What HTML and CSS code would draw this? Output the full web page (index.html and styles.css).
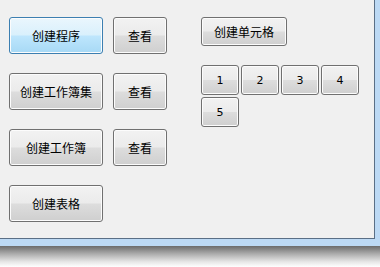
FILE: index.html
```html
<!DOCTYPE html>
<html>
<head>
<meta charset="utf-8">
<link rel="stylesheet" href="styles.css">
</head>
<body>
<div class="window">
  <div class="frame">
    <div class="client">
      <div class="left">
        <div class="row">
          <button class="btn big active">创建程序</button>
          <button class="btn small">查看</button>
        </div>
        <div class="row">
          <button class="btn big">创建工作簿集</button>
          <button class="btn small">查看</button>
        </div>
        <div class="row">
          <button class="btn big">创建工作簿</button>
          <button class="btn small">查看</button>
        </div>
        <div class="row">
          <button class="btn big">创建表格</button>
        </div>
      </div>
      <div class="right">
        <button class="btn cell">创建单元格</button>
        <div class="nums">
          <button class="btn num">1</button>
          <button class="btn num">2</button>
          <button class="btn num">3</button>
          <button class="btn num">4</button>
          <button class="btn num">5</button>
        </div>
      </div>
    </div>
  </div>
  <div class="shadow"></div>
</div>
</body>
</html>
```
FILE: styles.css
```css
html, body {
  margin: 0;
  padding: 0;
  background: #ffffff;
}
.window {
  width: 380px;
  height: 267px;
  display: flex;
  flex-direction: column;
}
.frame {
  background: #bcd9f4;
  padding: 0 5px 7px 0;
  display: flex;
}
.client {
  box-sizing: border-box;
  width: 375px;
  height: 239px;
  background: #f0f0f0;
  border-right: 1px solid #5a6f86;
  border-bottom: 1px solid #5a6f86;
  padding: 17px 0 0 9px;
  display: flex;
  gap: 34px;
  align-items: flex-start;
}
.shadow {
  flex: 1;
  background: linear-gradient(to bottom, #6b6b6b 0%, #a8a8a8 35%, #e6e6e6 75%, #ffffff 100%);
}
.left {
  display: flex;
  flex-direction: column;
  gap: 19px;
}
.row {
  display: flex;
  gap: 10px;
}
.btn {
  box-sizing: border-box;
  margin: 0;
  padding: 0;
  border: 1px solid #707070;
  border-radius: 3px;
  background: linear-gradient(to bottom, #f2f2f2 0%, #ebebeb 49%, #dddddd 51%, #cfcfcf 100%);
  box-shadow: inset 0 0 0 1px #fcfcfc;
  font-family: "Noto Sans CJK SC", "Liberation Sans", sans-serif;
  font-size: 12px;
  color: #000;
  line-height: 1;
}
.btn.active {
  border-color: #3c7fb1;
  background: linear-gradient(to bottom, #eaf6fd 0%, #d9f0fc 49%, #bee6fd 51%, #a7d9f5 100%);
}
.big {
  width: 94px;
  height: 37px;
}
.small {
  width: 54px;
  height: 37px;
}
.right {
  display: flex;
  flex-direction: column;
  gap: 19px;
}
.cell {
  width: 86px;
  height: 29px;
}
.nums {
  display: grid;
  grid-template-columns: repeat(4, 38px);
  grid-auto-rows: 30px;
  gap: 2px 2px;
}
.num {
  width: 38px;
  height: 30px;
  font-family: "DejaVu Sans", sans-serif;
  font-size: 11px;
}
```
